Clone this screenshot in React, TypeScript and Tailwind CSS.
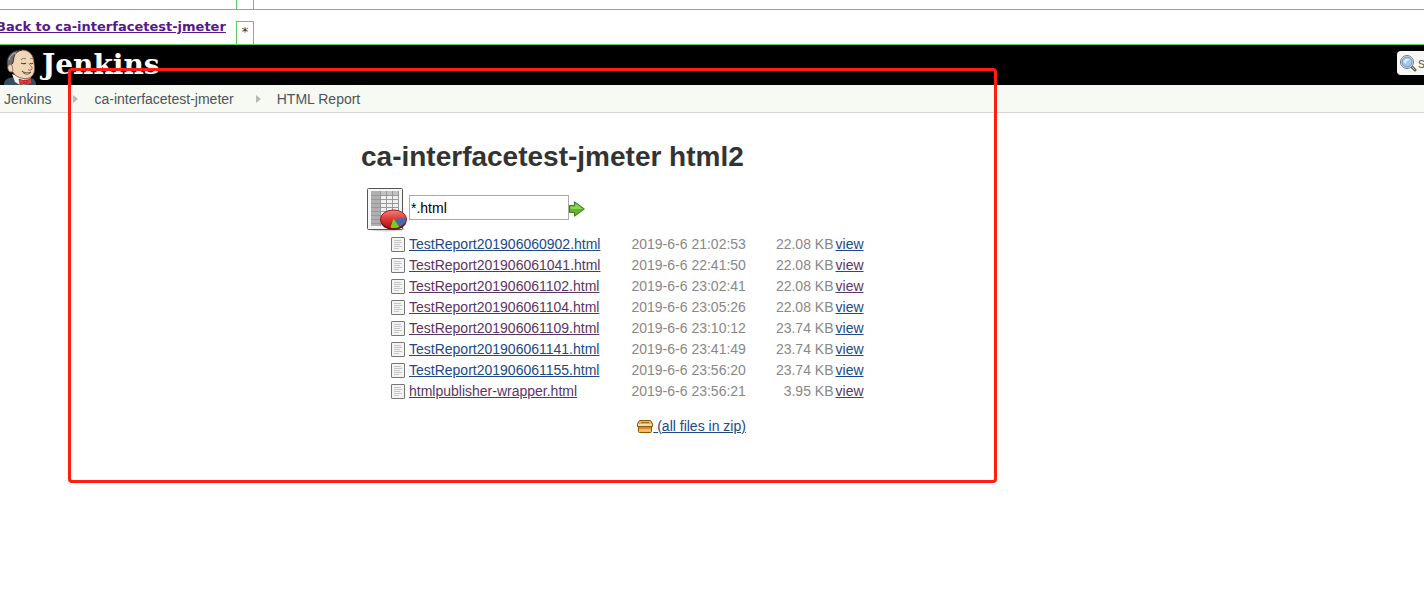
import { ReactNode } from "react";

type ReportFile = {
  name: string;
  date: string;
  size: string;
  visited?: boolean;
  viewVisited?: boolean;
};

const files: ReportFile[] = [
  { name: "TestReport201906060902.html", date: "2019-6-6 21:02:53", size: "22.08 KB" },
  { name: "TestReport201906061041.html", date: "2019-6-6 22:41:50", size: "22.08 KB", visited: true, viewVisited: true },
  { name: "TestReport201906061102.html", date: "2019-6-6 23:02:41", size: "22.08 KB", visited: true, viewVisited: true },
  { name: "TestReport201906061104.html", date: "2019-6-6 23:05:26", size: "22.08 KB", visited: true },
  { name: "TestReport201906061109.html", date: "2019-6-6 23:10:12", size: "23.74 KB", visited: true },
  { name: "TestReport201906061141.html", date: "2019-6-6 23:41:49", size: "23.74 KB" },
  { name: "TestReport201906061155.html", date: "2019-6-6 23:56:20", size: "23.74 KB" },
  { name: "htmlpublisher-wrapper.html", date: "2019-6-6 23:56:21", size: "3.95 KB", visited: true, viewVisited: true },
];

function ButlerLogo() {
  return (
    <svg className="shrink-0" width="34" height="36" viewBox="0 0 34 36" aria-hidden="true">
      {/* suit and collar */}
      <path d="M0 36c0-4 2-6 5-7l5-1 16 1c4 0 6 3 6 7z" fill="#335061" />
      <path d="M8 25l3 8 5 3 9-1 2-7-8 1z" fill="#f5f2ee" />
      {/* head */}
      <path d="M6 15c0-9 5-14 12-14 8 0 12 6 12 13 1 5 1 10-2 13-3 3-7 3-11 2s-8-4-9-8z" fill="#f0d6b7" stroke="#6d5040" strokeWidth=".8" />
      {/* hair */}
      <path d="M4 19C1 11 5 3 13 1.500c2-.4 3-.5 5-.5-4 1-7 3-8 7l-1 6-2 2-1 4z" fill="#6d6b6d" stroke="#231f20" strokeWidth=".8" />
      <path d="M5 11c1-4 3-6 7-7" fill="none" stroke="#b9b7b8" strokeWidth="1" />
      {/* ear */}
      <path d="M8 16c-3-1-5 1-4 4 1 3 3 4 5 2z" fill="#f0d6b7" stroke="#8d6b55" strokeWidth=".8" />
      {/* brows and closed eyes */}
      <path d="M17 11c1-2 4-2 5-1M26 10c1-1 2-.7 3 0" fill="none" stroke="#6b5547" strokeWidth=".8" />
      <path d="M17 14c2 1 4 1 5 0M26 14c1 1 2 1 3 0" fill="none" stroke="#231f20" strokeWidth="1" />
      {/* nose and smile */}
      <path d="M25 14c0 2 4 4 3 6-1 1.500-3 1.500-4 .5" fill="none" stroke="#8d6b55" strokeWidth="1" />
      <path d="M18 22c2 2 6 2.500 9 1-2 3-7 3-9-1z" fill="#fff" stroke="#4b302a" strokeWidth=".8" />
      {/* bow tie */}
      <path d="M15 30l6 2 6-3 1 6-6-1-6 2z" fill="#e0403a" stroke="#7e1517" strokeWidth=".6" />
      <path d="M20 31h3v4h-3z" fill="#ef3d3a" stroke="#7e1517" strokeWidth=".6" />
    </svg>
  );
}

function SearchIcon() {
  return (
    <svg className="shrink-0" width="17" height="17" viewBox="0 0 17 17" aria-hidden="true">
      <path d="M11.500 11.500l3.500 3.500" stroke="#5f5f5f" strokeWidth="3" strokeLinecap="round" />
      <path d="M12 12l2.500 2.500" stroke="#c0c0c0" strokeWidth="1" strokeLinecap="round" />
      <circle cx="7" cy="7" r="6.500" fill="#eee" stroke="#777" strokeWidth="1" />
      <circle cx="7" cy="7" r="5" fill="#a3c8f0" stroke="#6d8fb8" strokeWidth="1" />
      <path d="M3.500 7c.5-3 4-4.500 6.500-2-2 0-4 1-4 4z" fill="#dcecfd" />
    </svg>
  );
}

function ReportIcon() {
  return (
    <svg className="block" width="43" height="46" viewBox="0 0 43 46" aria-hidden="true">
      <defs>
        <linearGradient id="pie" x2="0" y2="1">
          <stop stopColor="#f4807a" />
          <stop offset=".5" stopColor="#dc3a36" />
          <stop offset="1" stopColor="#b80d14" />
        </linearGradient>
      </defs>
      <ellipse cx="21" cy="42" rx="18" ry="2.500" fill="#d4d4d4" />
      <rect x="1.500" y="1.500" width="35" height="41" rx="1" fill="#f6f6f6" stroke="#555" />
      <path d="M5 4h28v35H5z" fill="#f0f0f0" />
      <path d="M5 4h9v35H5z" fill="#b0b0b0" />
      <path d="M14 4h19v4H14z" fill="#c2c2c2" />
      <path d="M5 8.500h28M5 12.500h28M5 16.500h28M5 20.500h28M5 24.500h28M5 28.500h28M5 32.500h28M5 36.500h28M14.500 4v35M20.500 4v35M26.500 4v35M32.500 4v35" fill="none" stroke="#999" />
      <ellipse cx="27.500" cy="33.500" rx="13" ry="9.500" fill="#6f0b10" />
      <ellipse cx="27.500" cy="32" rx="13" ry="9" fill="url(#pie)" stroke="#9e1a1d" />
      <path d="M27.500 32l12.500-1c0 4-2 6-6 8.500z" fill="#3b6fb5" />
      <path d="M27.500 31.500l6 8.500c-3 1-6 1.500-9 .5z" fill="#73d216" />
    </svg>
  );
}

function ArrowIcon() {
  return (
    <svg width="16" height="16" viewBox="0 0 16 16" aria-hidden="true">
      <path d="M.5 4.500h5V.7L15.400 8l-9.900 7.300v-3.800h-5z" fill="#5fb52c" stroke="#3f7a1f" />
      <path d="M1.500 5.500h5V2.800L13.500 8h-12z" fill="#8fd35c" />
    </svg>
  );
}

function TextIcon() {
  return (
    <svg className="ml-auto block" width="14" height="16" viewBox="0 0 14 16" aria-hidden="true">
      <rect x=".5" y="1.500" width="13" height="14" rx=".5" fill="#f4f4f3" stroke="#777" />
      <path d="M3 4.500h7M3 6.500h8M3 8.500h6M3 10.500h8M3 12.500h5" stroke="#c5c5c5" />
    </svg>
  );
}

function ZipIcon() {
  return (
    <svg className="inline-block" width="16" height="16" viewBox="0 0 16 16" aria-hidden="true">
      <path d="M2.500 2.500h11l2 3v3h-1v5a1 1 0 01-1 1h-11a1 1 0 01-1-1v-5h-1v-3z" fill="#dc9a45" stroke="#8f5902" />
      <path d="M3 3h10l1.500 2.500h-13z" fill="#e9b96e" />
      <path d="M4 4.500h8" stroke="#a8691c" />
      <path d="M1 6h14v2H1z" fill="#f6dcae" />
      <path d="M1 8.500h14" stroke="#8f5902" />
      <path d="M2 9h12v2H2z" fill="#d08a35" />
      <path d="M2 11h12v3H2z" fill="#efbd72" />
    </svg>
  );
}

function Crumb({ children }: { children: ReactNode }) {
  return <a href="#" className="text-[#4d545d]">{children}</a>;
}

function Separator() {
  return (
    <svg className="ml-[22px] mr-4" width="5" height="8" viewBox="0 0 5 8" aria-hidden="true">
      <path d="M0 0l5 4-5 4z" fill="#b8b8b8" />
    </svg>
  );
}

export default function App() {
  return (
    <div className="relative overflow-hidden bg-white font-['Liberation_Sans',Arial,sans-serif] text-sm text-[#333]">
      {/* Wrapper frame bar */}
      <div className="flex h-[10px] border-b border-[#5fca5f]">
        <div className="ml-[236px] w-[18px] border-x border-[#5fca5f]" />
      </div>
      <div className="flex h-[35px] items-end border-b border-[#5fca5f] font-['DejaVu_Sans',Verdana,sans-serif] text-[13px]">
        <div className="w-[236px] self-center">
          <a href="#" className="-ml-1 whitespace-nowrap font-bold text-[#551a8b] underline">Back to ca-interfacetest-jmeter</a>
        </div>
        <div className="h-[23px] w-[18px] border border-b-0 border-[#5fca5f] text-center leading-5">*</div>
      </div>

      <header className="flex h-10 items-start justify-between bg-black">
        <a href="#" className="flex pl-1 pt-1">
          <ButlerLogo />
          <span className="pl-1 font-['DejaVu_Serif',Georgia,serif] text-[28px] font-bold leading-8 text-white">Jenkins</span>
        </a>
        <label className="mt-[6px] flex h-6 w-[27px] items-center overflow-hidden rounded-l bg-[#f7f7f7] pl-[3px]">
          <SearchIcon />
          <input type="text" aria-label="Search" placeholder="search" className="ml-px w-20 shrink-0 bg-transparent text-sm placeholder:text-[#666]" />
        </label>
      </header>

      <nav className="flex h-7 items-center border-b border-[#d3d7cf] bg-[#f6faf2] pl-1">
        <Crumb>Jenkins</Crumb>
        <Separator />
        <Crumb>ca-interfacetest-jmeter</Crumb>
        <Separator />
        <Crumb>HTML Report</Crumb>
      </nav>

      <main className="min-h-[480px] pl-[361px] pt-6">
        <h1 className="text-[28px] font-bold leading-10">ca-interfacetest-jmeter html2</h1>
        <table className="mt-[10px] border-collapse">
          <tbody>
            <tr>
              <td className="w-12 pl-[5px]">
                <ReportIcon />
              </td>
              <td colSpan={4} className="pt-2 align-top">
                <form className="flex items-center" onSubmit={(e) => e.preventDefault()}>
                  <input type="text" aria-label="File pattern" defaultValue="*.html" className="h-[25px] w-40 border border-[#aaa] px-px text-black" />
                  <button type="submit" aria-label="Go" className="pt-[2px]">
                    <ArrowIcon />
                  </button>
                </form>
              </td>
            </tr>
            {files.map((file) => (
              <tr key={file.name} className="h-[21px] leading-5">
                <td className="pr-1">
                  <TextIcon />
                </td>
                <td>
                  <a href="#" className={file.visited ? "text-[#5c3566] underline" : "text-[#204a87] underline"}>{file.name}</a>
                </td>
                <td className="pl-[31px] text-[#888]">{file.date}</td>
                <td className="pl-[30px] text-right text-[#888]">{file.size}</td>
                <td className="pl-[2px]">
                  <a href="#" className={file.viewVisited ? "text-[#5c3566] underline" : "text-[#204a87] underline"}>view</a>
                </td>
              </tr>
            ))}
            <tr>
              <td colSpan={3} className="pt-[15px] text-right">
                <a href="#" className="inline-flex items-center text-[#204a87] underline">
                  <ZipIcon />
                  <span className="whitespace-pre"> (all files in zip)</span>
                </a>
              </td>
            </tr>
          </tbody>
        </table>
      </main>

      {/* Highlight over the report area */}
      <div className="pointer-events-none absolute left-[68px] top-[68px] h-[415px] w-[929px] rounded-sm border-3 border-[#ff1e10]" />
    </div>
  );
}
